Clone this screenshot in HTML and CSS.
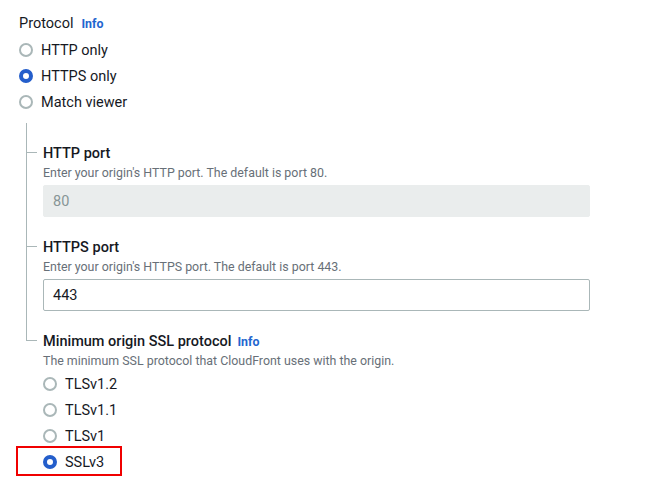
FILE: index.html
```html
<!DOCTYPE html>
<html lang="en">
<head>
<meta charset="utf-8">
<title>Origin protocol</title>
<link rel="stylesheet" href="styles.css">
</head>
<body>
<div class="page">
  <div class="field-label">
    <span class="label-text">Protocol</span>
    <a class="info" href="#">Info</a>
  </div>
  <div class="radio-list">
    <label class="radio-row"><span class="radio"></span><span>HTTP only</span></label>
    <label class="radio-row"><span class="radio checked"></span><span>HTTPS only</span></label>
    <label class="radio-row"><span class="radio"></span><span>Match viewer</span></label>
  </div>

  <div class="tree">
    <div class="tree-item">
      <div class="rail"><div class="tick"></div></div>
      <div class="item-body">
        <div class="sub-label">HTTP port</div>
        <div class="desc">Enter your origin's HTTP port. The default is port 80.</div>
        <div class="input disabled">80</div>
      </div>
    </div>
    <div class="tree-item">
      <div class="rail"><div class="tick"></div></div>
      <div class="item-body">
        <div class="sub-label">HTTPS port</div>
        <div class="desc">Enter your origin's HTTPS port. The default is port 443.</div>
        <div class="input">443</div>
      </div>
    </div>
    <div class="tree-item last">
      <div class="rail"><div class="tick"></div></div>
      <div class="item-body">
        <div class="sub-label">Minimum origin SSL protocol <a class="info" href="#">Info</a></div>
        <div class="desc">The minimum SSL protocol that CloudFront uses with the origin.</div>
        <div class="radio-list">
          <label class="radio-row"><span class="radio"></span><span>TLSv1.2</span></label>
          <label class="radio-row"><span class="radio"></span><span>TLSv1.1</span></label>
          <label class="radio-row"><span class="radio"></span><span>TLSv1</span></label>
          <label class="radio-row highlighted"><span class="radio checked"></span><span>SSLv3</span><span class="callout"></span></label>
        </div>
      </div>
    </div>
  </div>
</div>
</body>
</html>
```
FILE: styles.css
```css
* { box-sizing: border-box; }
html, body { margin: 0; padding: 0; background: #ffffff; }
body {
  font-family: Roboto, "Liberation Sans", Arial, sans-serif;
  color: #16191f;
  font-size: 14.5px;
}
.page {
  padding: 13px 0 14px 19px;
  width: 590px;
}
.field-label {
  height: 22px;
  line-height: 22px;
  display: flex;
  align-items: center;
  gap: 8px;
}
.label-text { font-size: 14.5px; }
.info {
  color: #1f66cf;
  font-weight: 700;
  font-size: 12.4px;
  text-decoration: none;
}
.radio-list {
  margin-top: 2px;
  display: flex;
  flex-direction: column;
}
.radio-row {
  height: 26px;
  display: flex;
  align-items: center;
  gap: 8px;
  font-size: 14.5px;
  position: relative;
  width: max-content;
}
.radio {
  width: 14px;
  height: 14px;
  border-radius: 50%;
  border: 2px solid #aab7b8;
  background: #fff;
  flex: none;
}
.radio.checked {
  border: 4px solid #245ecb;
}
.callout {
  position: absolute;
  left: -27px;
  top: -3px;
  width: 106px;
  height: 30px;
  border: 2px solid #f00000;
}
.tree {
  margin-top: 8px;
  margin-left: 7px;
  display: flex;
  flex-direction: column;
}
.tree-item {
  display: flex;
  padding-top: 20px;
  border-left: 1px solid #aab7b8;
}
.tree-item.last {
  border-left: none;
}
.rail {
  width: 16px;
  flex: none;
  display: flex;
  flex-direction: column;
}
.tick {
  height: 10px;
  width: 10px;
  border-bottom: 1px solid #aab7b8;
}
.tree-item.last .rail {
  width: 17px;
  margin-top: -20px;
}
.tree-item.last .tick {
  width: 11px;
  height: 30px;
  border-left: 1px solid #aab7b8;
}
.item-body {
  flex: 1;
  display: flex;
  flex-direction: column;
}
.sub-label {
  height: 22px;
  line-height: 22px;
  font-weight: 500;
  font-size: 14.5px;
  display: flex;
  align-items: center;
  gap: 6px;
}
.desc {
  height: 16px;
  line-height: 16px;
  font-size: 12.4px;
  color: #687078;
}
.input {
  margin-top: 4px;
  height: 32px;
  border: 1px solid #aab7b8;
  border-radius: 2px;
  padding: 0 9px;
  display: flex;
  align-items: center;
  font-size: 14.5px;
  color: #16191f;
}
.input.disabled {
  background: #eaeded;
  border-color: #eaeded;
  color: #879596;
}
```
